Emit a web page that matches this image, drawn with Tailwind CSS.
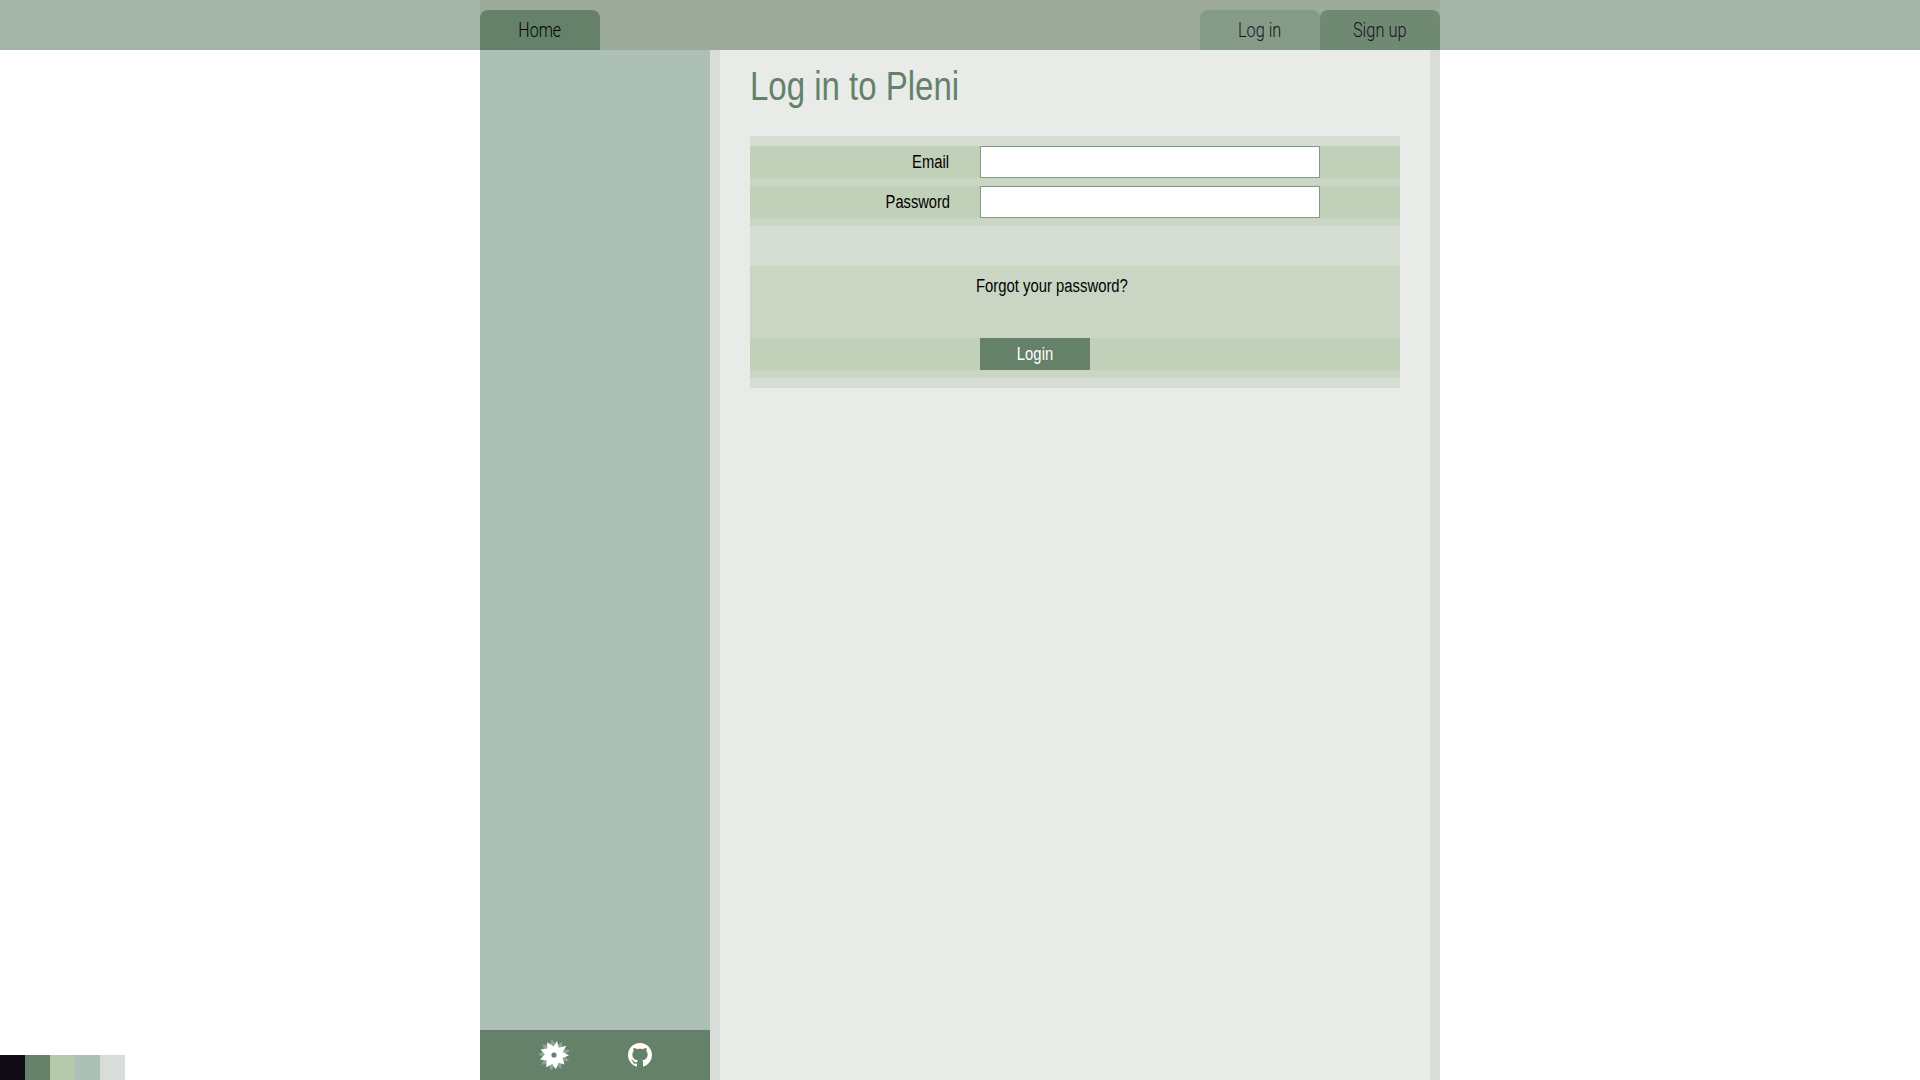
<!DOCTYPE html>
<html lang="en">
<head>
<meta charset="utf-8">
<title>Log in to Pleni</title>
<script src="https://cdn.jsdelivr.net/npm/@tailwindcss/browser@4"></script>
</head>
<body class="h-screen overflow-hidden bg-white flex flex-col text-black font-['Liberation_Sans',sans-serif]">
<header class="h-[50px] shrink-0 bg-[#a4b4a6] flex justify-center font-['Roboto',sans-serif] font-light text-[20px]">
  <nav class="w-[960px] h-full bg-[#9caa9b] flex pt-[10px] text-[#15151c]">
    <a class="w-[120px] h-10 rounded-t-[8px] bg-[#65816a] text-black flex items-center justify-center"><span class="inline-block scale-x-[0.8]">Home</span></a>
    <a class="w-[120px] h-10 ml-auto rounded-t-[8px] bg-[#859b87] flex items-center justify-center"><span class="inline-block scale-x-[0.815]">Log in</span></a>
    <a class="w-[120px] h-10 rounded-t-[8px] bg-[#708973] flex items-center justify-center"><span class="inline-block scale-x-[0.82]">Sign up</span></a>
  </nav>
</header>
<div class="flex-1 w-[960px] mx-auto flex">
  <aside class="w-[230px] bg-[#adc0b8] flex flex-col justify-end">
    <footer class="h-[50px] bg-[#65816a] flex items-center pl-[58px] gap-[58px]">
      <svg class="w-8 h-8" viewBox="-16 -16 32 32">
        <defs><path id="burst" d="M-6.8-12.8L-.5-8.5L3-14.1L4.8-7.2L12.3-9.2L8.8-2.9L15 .5L8.5 3L10.6 9.6L4.5 7.8L1.9 14.2L-1.9 9L-7.8 12.2L-7.3 5.4L-14 4.4L-9.2-.4L-13.4-5.5L-6.7-6.4Z"/></defs>
        <use href="#burst" fill="#fff" opacity=".28" transform="rotate(20) scale(1.1)"/>
        <use href="#burst" fill="#fff"/>
        <circle r="2.6" fill="#65816a"/>
      </svg>
      <svg class="w-6 h-6" viewBox="0 0 16 16" fill="#fff"><path d="M8 0C3.58 0 0 3.58 0 8c0 3.54 2.29 6.53 5.47 7.59.4.07.55-.17.55-.38 0-.19-.01-.82-.01-1.49-2.01.37-2.53-.49-2.69-.94-.09-.23-.48-.94-.82-1.13-.28-.15-.68-.52-.01-.53.63-.01 1.08.58 1.23.82.72 1.21 1.87.87 2.33.66.07-.52.28-.87.51-1.07-1.78-.2-3.64-.89-3.64-3.95 0-.87.31-1.59.82-2.15-.08-.2-.36-1.02.08-2.12 0 0 .67-.21 2.2.82.64-.18 1.32-.27 2-.27s1.36.09 2 .27c1.53-1.04 2.2-.82 2.2-.82.44 1.1.16 1.92.08 2.12.51.56.82 1.27.82 2.15 0 3.07-1.87 3.75-3.65 3.95.29.25.54.73.54 1.48 0 1.07-.01 1.93-.01 2.2 0 .21.15.46.55.38A8.01 8.01 0 0 0 16 8c0-4.42-3.58-8-8-8Z"/></svg>
    </footer>
  </aside>
  <main class="w-[730px] bg-[#e8ebe8] border-x-[10px] border-[#d8ddd9] px-[30px]">
    <h1 class="h-[86px] pt-[12px] text-[40px] leading-[48px] text-[#65816a]"><span class="inline-block origin-left scale-x-[0.825]">Log in to Pleni</span></h1>
    <form class="w-[650px] h-[252px] bg-[#d6ded3] py-[10px] text-[18px]">
      <div class="bg-[#cad6c3] pb-2 flex flex-col gap-2">
        <div class="h-8 bg-[#c1d0b9] flex">
          <label class="w-[230px] pr-[31px] text-right leading-8"><span class="inline-block origin-right scale-x-[0.82]">Email</span></label>
          <input class="w-[340px] h-8 bg-white border border-[#829a85] outline-none" type="email">
        </div>
        <div class="h-8 bg-[#c1d0b9] flex">
          <label class="w-[230px] pr-[30px] text-right leading-8"><span class="inline-block origin-right scale-x-[0.815]">Password</span></label>
          <input class="w-[340px] h-8 bg-white border border-[#829a85] outline-none" type="password">
        </div>
      </div>
      <div class="h-[112px] mt-10 pb-2 bg-[#cad6c3] flex flex-col">
        <a class="h-[72px] pl-[226px] leading-[40px]"><span class="inline-block origin-left scale-x-[0.825]">Forgot your password?</span></a>
        <div class="h-8 bg-[#c1d0b9] pl-[230px] flex">
          <button class="w-[110px] h-8 bg-[#65816a] text-white" type="button"><span class="inline-block scale-x-[0.825]">Login</span></button>
        </div>
      </div>
    </form>
  </main>
</div>
<div class="absolute left-0 bottom-0 flex">
  <i class="size-[25px] bg-[#0f0b15]"></i><i class="size-[25px] bg-[#65816a]"></i><i class="size-[25px] bg-[#b5c9aa]"></i><i class="size-[25px] bg-[#adc0b8]"></i><i class="size-[25px] bg-[#d8ddd9]"></i>
</div>
</body>
</html>
